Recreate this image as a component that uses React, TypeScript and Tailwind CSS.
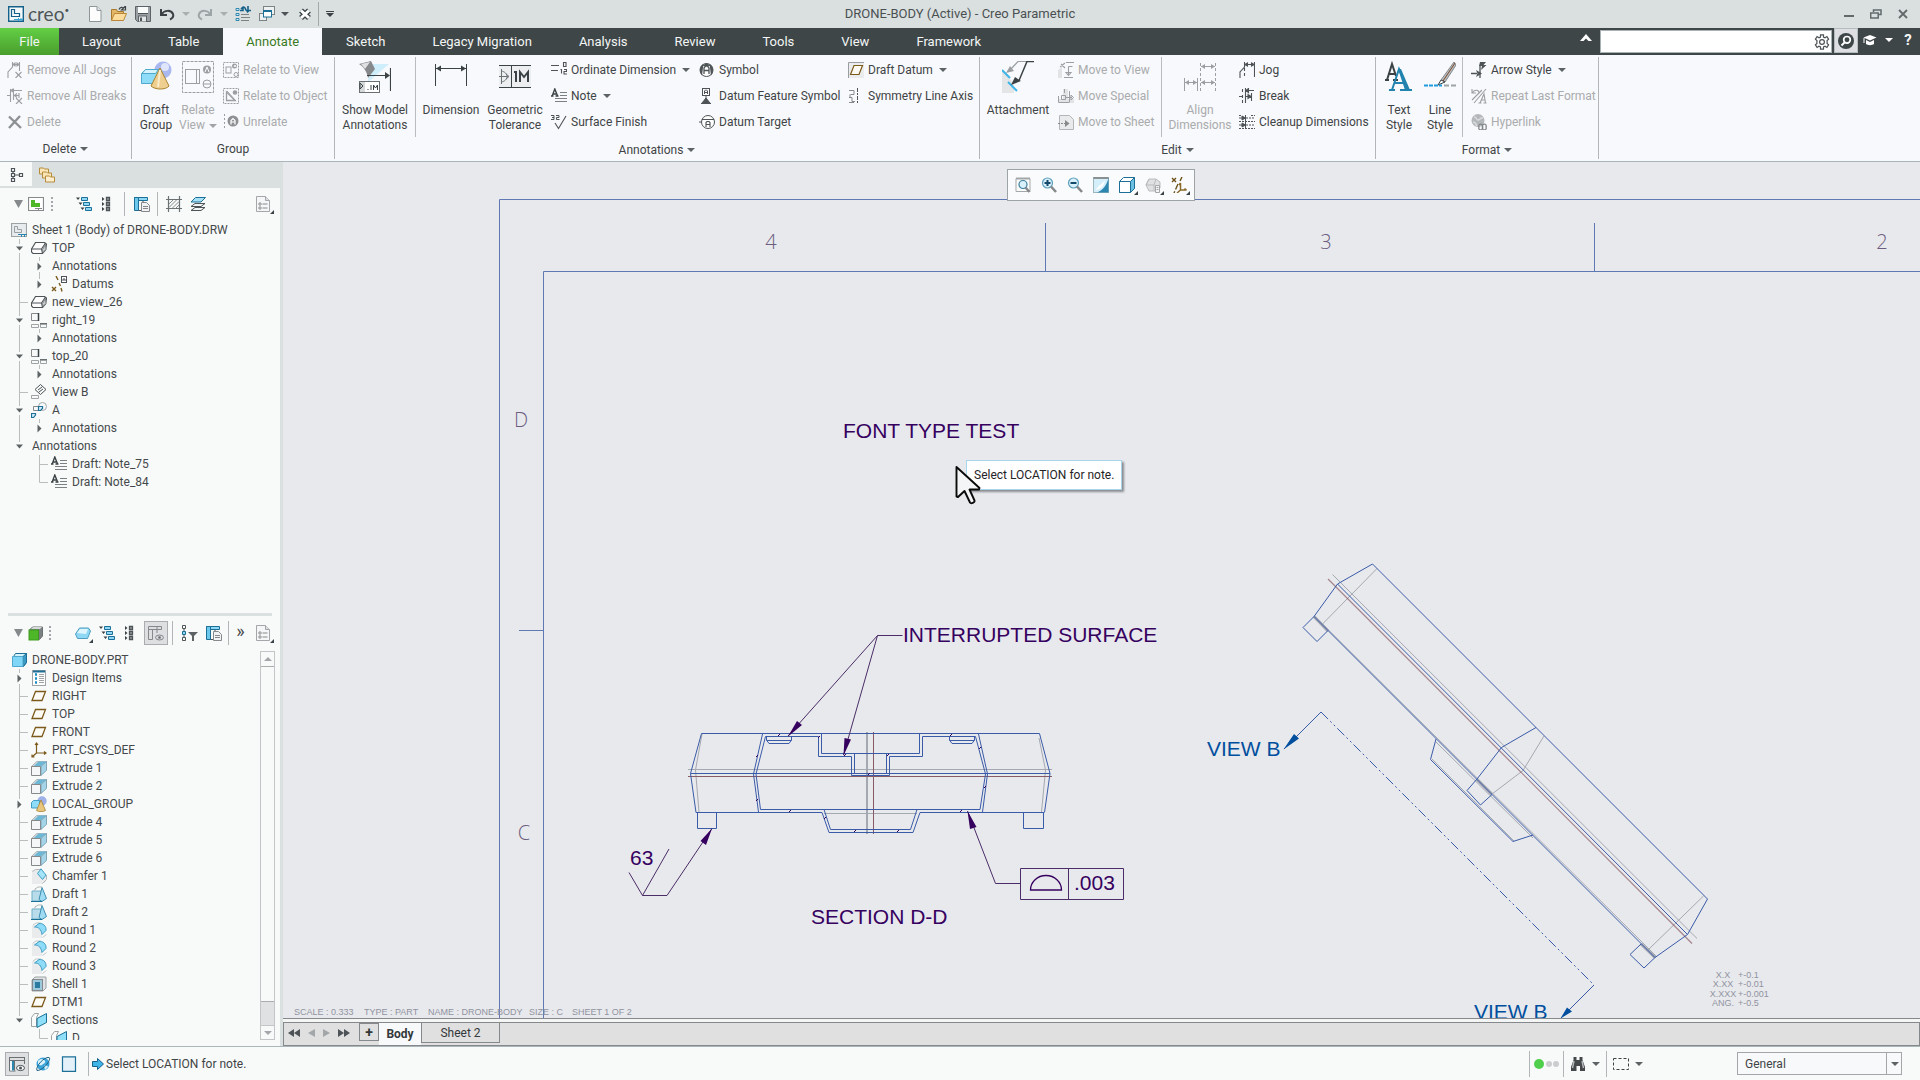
import type { ReactNode } from "react";

/* ---------- icons ---------- */

const G = "#4d5356";
const D = "#9b9fa1";
const BLUE = "#1c6f96";
const SKY = "#8fd8f5";

const ICONS: Record<string, ReactNode> = {
  newFile: (
    <>
      <path d="M2.500 .5h7.500l4 4v11h-11.500z" fill="#fdfdfe" stroke="#8e9699" />
      <path d="M10 .5v4h4" fill="#dfe5e8" stroke="#8e9699" />
    </>
  ),
  open: (
    <>
      <path d="M.5 14.500v-11h5l1 2h6v3" fill="#e3b566" stroke="#a9792d" />
      <path d="M.5 14.500l3-7h12l-3 7z" fill="#fbdc9c" stroke="#b98736" />
      <path d="M8 3.500c1-2.500 4-3 5-1M14.500 0v4h-4z" fill="none" stroke="#3b4245" strokeWidth="1.200" />
    </>
  ),
  save: (
    <>
      <path d="M.5 .5h15v15h-13l-2-2z" fill="#9aa0a3" stroke="#5c6366" />
      <rect x="3" y="1" width="10" height="6" fill="#fafbfb" />
      <path d="M3 7.500h10" stroke="#4d5356" />
      <rect x="3.500" y="10" width="8" height="6" fill="#e3e6e7" stroke="#5c6366" />
      <rect x="5" y="11.500" width="2" height="3.500" fill="#4d5356" />
    </>
  ),
  undo: <path d="M2 3v6h6M2.500 8.500C5 4 12 3.500 14 8c.8 2.500-.7 4.500-3 5.500" fill="none" stroke="#3b4245" strokeWidth="2" />,
  redo: <path d="M14 3v6h-6M13.500 8.500C11 4 4 3.500 2 8c-.8 2.500 .7 4.500 3 5.500" fill="none" stroke="#9ea5a6" strokeWidth="2" />,
  regen: (
    <>
      <path d="M1 2.500h3v2h-3zM1 7.500h3v2h-3zM1 12.500h3v2h-3z" fill="#d7effa" stroke="#2f87ad" />
      <path d="M6 8.500h8M6 11.500h9M6 14.500h8" stroke="#7d8385" />
      <path d="M5 4.500h3v-3M8 1l-2 2M12 6.500l2-2h2M13 0v6M7.500 1.500c1.500-1 2.500 0 3 1.500s1.500 2 2.500 1.500" fill="none" stroke="#14618a" strokeWidth="1.600" />
    </>
  ),
  windows: (
    <>
      <rect x="4.500" y=".5" width="11" height="8" fill="#eef1f2" stroke="#7d8385" />
      <rect x=".5" y="7.500" width="7" height="7" fill="#eef1f2" stroke="#7d8385" />
      <rect x="4.500" y="4.500" width="8" height="6.500" fill="#fff" stroke="#1c6f96" />
      <path d="M4 5h9" stroke="#1c6f96" strokeWidth="2" />
    </>
  ),
  closeWin: (
    <>
      <path d="M4 4.500l8 7.500M12 4.500L4 12" stroke="#3b4245" strokeWidth="5.500" />
      <path d="M4 4.500l8 7.500M12 4.500L4 12" stroke="#fff" strokeWidth="3" />
    </>
  ),
  jogs: (
    <path d="M5.500 0v5L1 10v6M12.500 0v9M6 2.500h6M6 2.500l2-1.500v3zM12 2.500l-2-1.500v3zM8.500 10l6 6M14.500 10l-6 6" fill="none" stroke={D} strokeWidth="1.100" />
  ),
  breaks: (
    <path d="M0 7.500h3M3.500 1v13M6.500 1v11M4 2.500h11M4 2.500l2-1.500v3zM7 7.500h5M12 5v5M10 9.500l-2.500-2 2.500-2M9 10l6 6M15 10l-6 6" fill="none" stroke={D} strokeWidth="1.100" />
  ),
  del: <path d="M2 2.500l12 11.500M13 2L2 14" stroke="#8d9193" strokeWidth="2.400" />,
  relView: (
    <>
      <rect x=".5" y=".5" width="15" height="15" fill="none" stroke={D} strokeDasharray="2 1" />
      <rect x="3" y="5" width="5" height="6" fill="none" stroke={D} />
      <circle cx="11.500" cy="4" r="2.500" fill={D} />
      <circle cx="13" cy="12.500" r="2" fill="none" stroke={D} />
      <path d="M11 5l1-2 1 2" stroke="#fff" fill="none" />
    </>
  ),
  relObj: (
    <>
      <rect x=".5" y=".5" width="15" height="15" fill="none" stroke={D} strokeDasharray="2 1" />
      <path d="M3.500 4v8.500h8.500z" fill="none" stroke={D} strokeWidth="1.300" />
      <circle cx="12" cy="4.500" r="2.300" fill={D} />
      <path d="M4 3l9 10" stroke={D} />
    </>
  ),
  unrel: (
    <>
      <path d="M1.500 0v16" stroke={D} strokeDasharray="2 2" />
      <circle cx="10" cy="7" r="5.500" fill="#8d9193" />
      <path d="M8 10.500V6.500l2-2 2 2v4M8 8h4" fill="none" stroke="#fff" strokeWidth="1.200" />
    </>
  ),
  ordinate: (
    <>
      <path d="M0 3.500h8M0 8.500h7" stroke={G} />
      <path d="M12.500 .5h2.500v4h-2.500zM9.500 7.500h1v4M13 7.500h2.500v2h-2.500v2.500h3" fill="none" stroke={G} strokeWidth="1.100" />
    </>
  ),
  note: (
    <>
      <path d="M0 8h2.500M4.500 8h3M1.200 8L3.800 1l2.800 7M2 6h3.500" fill="none" stroke="#3b4245" strokeWidth="1.400" />
      <path d="M9 4.500h7M9 7.500h7M4 10.500h12M4 13.500h12" stroke="#7b8082" />
    </>
  ),
  surface: (
    <>
      <path d="M0 1.500h3v2H1M3 3.500v2H0M5 1.500h3v2H5.500v2H8.500" fill="none" stroke={G} />
      <path d="M4 9l3.500 5.500L15 2" fill="none" stroke={G} strokeWidth="1.100" />
    </>
  ),
  symbol: (
    <>
      <circle cx="7.500" cy="8" r="6.500" fill="#fff" stroke={G} />
      <path d="M1 8a6.500 6.500 0 0 1 3.500-6L3 13.500A6.500 6.500 0 0 1 1 8zM14 8a6.500 6.500 0 0 0-3.500-6L12 13.500A6.500 6.500 0 0 0 14 8z" fill={G} />
      <path d="M3 4l4.500-3L12 4z" fill={G} />
      <path d="M5 12V6l1.500-2h2L10 6v6M5 8.500h5" fill="none" stroke={G} strokeWidth="1.300" />
    </>
  ),
  datumFeat: (
    <>
      <rect x="3.500" y=".5" width="7" height="7" fill="#fff" stroke={G} />
      <path d="M5.500 6V3l1-1h1l1 1v3M5.500 4.500h3M7 8v4" fill="none" stroke={G} />
      <path d="M7 10l4 5H3zM2 15.500h10" fill={G} stroke={G} />
    </>
  ),
  datumTarget: (
    <>
      <circle cx="9" cy="8" r="6.500" fill="#fff" stroke={G} />
      <path d="M0 8h2.500M3 5.500h12M7 13V8.500l1-1h2l1 1V13M7 10.500h4" fill="none" stroke={G} strokeWidth="1.100" />
    </>
  ),
  draftDatum: (
    <>
      <path d="M.5 16V.5H16" fill="none" stroke="#9a9ea0" />
      <rect x="1" y="1" width="15" height="15" fill="#ebecee" />
      <path d="M6 3.500h8.500l-3.500 9H2.500z" fill="#fdfaf4" stroke="#7c5a1c" strokeWidth="1.200" />
    </>
  ),
  symAxis: (
    <>
      <path d="M9.500 0v16" stroke={G} strokeDasharray="4 1 2 1" />
      <path d="M1 2.500h5v4H2.500M1 9.500h3v4h3M2 6.500v3M1 14.500h5" fill="none" stroke="#85898b" />
    </>
  ),
  moveView: (
    <>
      <path d="M0 8l4-3v11H0z" fill="#e1e3e4" />
      <path d="M3 2l4 4M7 1l-5 4M8 .5h8M10.500 4.500h4M10.500 4.500v9M6 15.500h9M10.500 13.500l-2.500-3h5z" fill="none" stroke={D} strokeWidth="1.100" />
    </>
  ),
  moveSpecial: (
    <>
      <path d="M0 11h5V1h5v10h6v4H0z" fill="#e1e3e4" />
      <path d="M.5 14.500h11M.5 8v6M6.500 1v4M11.500 3v11M3.500 7.500h4v4h-4zM8 9.500h6M13 7l2.500 2.500L13 12z" fill="none" stroke={D} />
    </>
  ),
  moveSheet: (
    <>
      <path d="M1.500 1.500h10l4 4v10h-14z" fill="#e8eaeb" stroke="#b3b6b8" />
      <path d="M0 9.500h8" stroke="#85898b" strokeDasharray="2 1" />
      <path d="M7 6l4.500 3.500L7 13z" fill="#85898b" />
    </>
  ),
  jog: (
    <path d="M5.500 0v5L1 10v6M15.500 0v15M6 2.500h9M6 2.500l2.500-1.500v3zM15 2.500l-2.500-1.500v3zM5.500 6v3M5.500 11v3" fill="none" stroke={G} strokeWidth="1.100" />
  ),
  brk: (
    <path d="M0 8.500h3M6.500 8.500h6M12.500 5v8M3.500 1v3M3.500 7v3M3.500 12v3M6.500 0v15M6.500 2.500H15M7 2.500L9.500 .5v4zM12 8.500L9 6.500v4z" fill="none" stroke={G} strokeWidth="1.100" />
  ),
  cleanup: (
    <>
      <path d="M0 1.500h2M12 1.500h4M0 7.500h16M0 14.500h16M7 4h9M7 11h9" stroke={G} strokeDasharray="2 1" />
      <path d="M0 4h6M0 11h6M6.500 1v14M3 2l3.500 2L3 6zM3 9l3.500 2L3 13z" fill={G} stroke={G} />
    </>
  ),
  arrowStyle: (
    <>
      <path d="M0 11.500h6M9 4v12" stroke={G} strokeWidth="1.300" fill="none" />
      <path d="M5 8l6 3.500L5 15l1.500-3.500zM9 0l6 0-2.500 3h3L10 8l1-4H8z" fill={G} />
    </>
  ),
  repeatFmt: (
    <path d="M1 1v4h4M1.500 4.500C4 1 8 2 8 5M15 1L3 15M11 2L1 12M7.500 15h3M12.500 15h3M9 15l4-9 1.500 9M10 12h4" fill="none" stroke={D} strokeWidth="1.100" />
  ),
  hyper: (
    <>
      <circle cx="7" cy="6.500" r="6.500" fill="#b5b8ba" />
      <path d="M3 3c3 0 2 3 4 3s3-3 5-2M2 8c3 0 3 3 4 4" stroke="#d9dbdc" strokeWidth="1.500" fill="none" />
      <path d="M8 13a2 2 0 1 1 3.500 0 2 2 0 1 0 3.500 0 2 2 0 1 0-3.500 0 2 2 0 1 1-3.500 0z" fill="none" stroke="#85898b" strokeWidth="1.300" />
    </>
  ),
  zoomFit: (
    <>
      <path d="M1 1.500h14v13H1z" fill="#fafbfb" stroke="#a3a7a9" />
      <path d="M1 1.500h14" stroke="#a3a7a9" strokeWidth="2" />
      <circle cx="8" cy="7.500" r="4" fill="#d9f1fb" stroke="#3b7f9e" strokeWidth="1.200" />
      <path d="M10.500 10.500l4 4.500" stroke="#85898b" strokeWidth="2.400" />
    </>
  ),
  zoomIn: (
    <>
      <circle cx="6.500" cy="6" r="5" fill="#d9f1fb" stroke="#5e9fbd" strokeWidth="1.200" />
      <path d="M10 9.500l5 5.500" stroke="#85898b" strokeWidth="2.600" />
      <path d="M6.500 3v6M3.500 6h6" stroke="#13496a" strokeWidth="2" />
    </>
  ),
  zoomOut: (
    <>
      <circle cx="6.500" cy="6" r="5" fill="#d9f1fb" stroke="#5e9fbd" strokeWidth="1.200" />
      <path d="M10 9.500l5 5.500" stroke="#85898b" strokeWidth="2.600" />
      <path d="M3.500 6h6" stroke="#13496a" strokeWidth="2" />
    </>
  ),
  repaint: (
    <>
      <rect x=".5" y=".5" width="15" height="15" fill="#d4eefa" stroke="#9db5bf" />
      <path d="M15.500 .5v15H4C10 13 14 8 15.500 .5z" fill="#2b87b0" />
      <path d="M3 13c2-5 7-6 9-10-1 6-4 9-9 10z" fill="#fff" />
      <path d="M.5 1h15" stroke="#8a9092" strokeWidth="2" />
    </>
  ),
  shade: (
    <>
      <path d="M.5 4.500l4-4h11v11l-4 4H.5z" fill="#fff" stroke={BLUE} />
      <path d="M11.500 4.500l4-4v11l-4 4z" fill="#6cc0e2" stroke={BLUE} />
      <path d="M.5 4.500h11v11H.5z" fill="#fff" stroke={BLUE} />
    </>
  ),
  savedView: (
    <>
      <path d="M1 8l3-6h7l4 3v6l-4 3H4z" fill="#dfe1e2" stroke="#b9bcbe" />
      <path d="M4 2l-3 6h8l2-6M9 8v6" fill="none" stroke="#b9bcbe" />
      <path d="M10.500 8.500h4v7h-4z" fill="#f4f5f5" stroke="#a3a7a9" />
      <path d="M11.500 10.500h2M11.500 12.500h2" stroke="#a3a7a9" />
    </>
  ),
  datumDisp: (
    <>
      <path d="M1 1l4 4M5 1L1 5M11 0L9 4M7 7L3 16" stroke="#6d5018" strokeWidth="1.400" strokeDasharray="6 2" fill="none" />
      <path d="M9.500 6v7h6M9.500 13L6 16M9.500 6l-1.500 2M15.500 13l-2-1.500" stroke="#8a6a2a" strokeWidth="1.500" fill="none" />
    </>
  ),
  modelTree: (
    <path d="M2.500 1.500h3v3h-3zM2.500 6.500h3v3h-3zM2.500 11.500h3v3h-3zM10.500 6.500h3v3h-3zM6 8h4M4 5v1M4 10v1" fill="none" stroke={G} strokeWidth="1.200" />
  ),
  folders: (
    <>
      <path d="M.5 1h4l1 1h4v5h-9z" fill="#fbe6b8" stroke="#b58b3c" />
      <path d="M3.500 5h4l1 1h4v5h-9z" fill="#fbe6b8" stroke="#b58b3c" />
      <path d="M6.500 9h4l1 1h4v5h-9z" fill="#fdeecd" stroke="#b58b3c" />
    </>
  ),
  sheetBox: (
    <>
      <path d="M.5 1.500h15v13H.5z" fill="#fff" stroke="#85898b" strokeWidth="1.200" />
      <path d="M3 4h4v3h5v4H3z" fill="#4db728" />
      <path d="M7 12.500h7M10.500 12v2.500" stroke="#85898b" />
    </>
  ),
  expand: (
    <>
      <path d="M5.500 1.500h6v3h-6zM7.500 6.500h6v3h-6zM9.500 11.500h6v3h-6z" fill={SKY} stroke={BLUE} />
      <path d="M0 1.500h4L2 4zM2.500 6.500h4l-2 2.500zM4.500 11.500h4l-2 2.500z" fill="#3b4245" />
    </>
  ),
  list: (
    <>
      <path d="M7.500 1.500h3v3h-3zM7.500 6.500h3v3h-3zM7.500 11.500h3v3h-3z" fill="#9ea3a5" stroke={G} strokeWidth="1.300" />
      <path d="M3 1l2.500 2L3 5zM3 6l2.500 2L3 10zM3 11l2.500 2L3 15z" fill="#3b4245" />
    </>
  ),
  columns: (
    <>
      <path d="M.5 1.500h13v3H.5z" fill={SKY} stroke={BLUE} />
      <path d="M.5 1.500h4v13h-4z" fill="#6cc8ec" stroke={BLUE} />
      <path d="M9 5v3M4.500 14.500h3" stroke={G} />
      <path d="M7.500 6.500h5l3 3v6h-8z" fill="#f0f2f3" stroke="#85898b" />
      <path d="M9 10.500h5M9 12.500h5" stroke="#85898b" />
    </>
  ),
  hatch: (
    <>
      <path d="M2.500 0v16M13.500 0v16M0 3.500h16M0 12.500h16" stroke="#6b7073" strokeWidth="1.200" />
      <path d="M3 8l4-4M3 11.500L10.500 4M6 12.500L13 5.500M9.500 12.500l3.500-3.500" stroke="#85898b" />
    </>
  ),
  layers: (
    <>
      <path d="M1 14.500l4-3h10l-4 3z" fill="#f4f5f5" stroke={G} />
      <path d="M1 10.500l4-3h10l-4 3z" fill="#f4f5f5" stroke={G} />
      <path d="M1 6l4.500-4.500h10L11 6z" fill="#a5e0f7" stroke={BLUE} />
    </>
  ),
  doc: (
    <>
      <path d="M.5 .5h9l4 4v11H.5z" fill="#f5f6f7" stroke="#a3a7a9" />
      <path d="M9.500 .5v4h4" fill="#dde0e2" stroke="#a3a7a9" />
      <path d="M6.500 8h5M6.500 12h5" stroke="#85898b" />
      <circle cx="4" cy="8" r="1.200" fill="none" stroke="#85898b" />
      <circle cx="4" cy="12" r="1.200" fill="none" stroke="#85898b" />
    </>
  ),
  sheet: (
    <>
      <path d="M.5 1.500h15v13H.5z" fill="#e8ecee" stroke="#9da3a5" strokeWidth="1.200" />
      <path d="M3.500 4.500h3v3h4v3h-7z" fill="none" stroke={D} />
      <path d="M7 12.500h9M10.500 12v3M13.500 12v3" stroke="#2b87b0" />
    </>
  ),
  view: (
    <>
      <path d="M.5 9l4-6.500h9l2 1.500-1 6-3 3.500H2L.5 12z" fill="#fdfdfd" stroke="#4d5356" strokeWidth="1.200" />
      <path d="M.5 9h10l1 4.500M10.500 9l4-6" fill="none" stroke="#4d5356" strokeWidth="1.100" />
      <path d="M11.500 9.500l3-5 .5 5-3 3z" fill="#c9cccd" stroke="#6b7073" strokeWidth=".8" />
    </>
  ),
  datums: (
    <>
      <path d="M5 0l2 4M8 7l1.500 3M10 12l1 3.500M1 11l4 4M5 11l-4 4" stroke="#7c5a1c" strokeWidth="1.400" fill="none" />
      <rect x="10.500" y=".5" width="5" height="6" fill="#fff" stroke={G} />
      <path d="M12 5V3h2v2" stroke={G} fill="none" />
    </>
  ),
  proj: (
    <>
      <path d="M.5 1.500h7v7h-7z" fill="none" stroke="#85898b" />
      <path d="M7.500 1v8M9 12h7" stroke="#3b4245" strokeWidth="1.500" />
      <path d="M.5 12.500h7v3h-7zM9.500 12.500h6v3h-6z" fill="none" stroke="#9ea3a5" />
    </>
  ),
  auxView: (
    <>
      <path d="M9.500 .5l5.500 5-5.500 5L4 5.500z" fill="none" stroke={G} />
      <path d="M7 6l4-3M8 8l4-3" stroke={G} />
      <path d="M.5 11.500h7v3h-7z" fill="none" stroke="#9ea3a5" />
    </>
  ),
  detail: (
    <>
      <circle cx="11.500" cy="4.500" r="4" fill="none" stroke="#a3a7a9" />
      <path d="M2.500 4.500h6v4h-6z" fill="none" stroke="#85898b" />
      <path d="M7.500 4.500h4v2l-2 2h-2zM.5 11.500h4v1.500l-2 2.500h-2z" fill="#d4eefa" stroke={BLUE} strokeWidth="1.200" />
    </>
  ),
  part: (
    <>
      <path d="M2.500 4.500l2-3h11v9l-3 4h-10z" fill="#d5f3fd" stroke={BLUE} />
      <path d="M12 4.500l3.500-3v9l-3.500 4z" fill="#3a9cc6" stroke={BLUE} />
      <path d="M1.500 4.500H12v10H1.500z" fill="#7fd6f7" stroke="#4fa9cf" />
    </>
  ),
  design: (
    <>
      <rect x="1.500" y=".5" width="13" height="15" fill="#fff" stroke="#9ea3a5" />
      <path d="M2 1.500h12" stroke="#1c6f96" strokeWidth="2" />
      <path d="M4 4.500h2M4 8.500h2M4 12.500h2" stroke="#1c8ec2" strokeWidth="2.500" />
      <path d="M8 4.500h5M8 6.500h5M8 8.500h5M8 10.500h5M8 12.500h5" stroke="#9ea3a5" />
    </>
  ),
  plane: <path d="M4.500 3.500h10l-3.500 9H1z" fill="#fdfbf6" stroke="#7c5a1c" strokeWidth="1.300" />,
  csys: <path d="M5.500 1v10H15M5.500 11L1 15M4 3l1.500-2L7 3M13 9.500l2 1.500-2 1.500M1 12.500V15h2.500" fill="none" stroke="#7c5a1c" strokeWidth="1.200" />,
  extrude: (
    <>
      <path d="M.5 6.500l5-5h10v8l-6 6" fill="#cfd6d9" stroke="#b3b7b9" />
      <path d="M3 6l4.500-4.500h8L10 6z" fill="#6db7d6" />
      <path d="M10 6.500l5.500-5v9l-5.500 5z" fill="#a5d3e7" stroke="#6d98ab" strokeWidth=".7" />
      <path d="M.5 6.500h9v9h-9z" fill="#f5f6f7" stroke="#85898b" />
    </>
  ),
  group: (
    <>
      <circle cx="11" cy="5" r="4.700" fill="#9fb0e8" />
      <path d="M.5 6.500l2-2h6v6l-1.500 1.500H.5z" fill="#8fdcf8" stroke="#3f9dc4" />
      <path d="M10 4l4.500 10.500c-2 1.500-7 1.500-9 0z" fill="#e9c67e" stroke="#a8832e" strokeWidth=".8" />
    </>
  ),
  chamfer: (
    <>
      <path d="M1 2h6l8 7v5l-4 2H1z" fill="#e9ebec" />
      <path d="M1.500 3.500l3-2h6M11.500 15.500l4-4V7" fill="none" stroke="#b3b7b9" />
      <path d="M6.500 5.500L10 .8l5 6.200-3.500 4.500z" fill="#a5e3f8" stroke="#3f9dc4" />
    </>
  ),
  draft: (
    <>
      <path d="M1 5h9v10H1z" fill="#b9dcea" stroke="#6fb0cb" />
      <path d="M4 3l3-2h4M3 5l2-3" stroke="#b3b7b9" fill="none" />
      <path d="M11 1.500l4.500 11-4.500 3-3-2z" fill="#9fdcf3" stroke="#3f8fb2" />
      <path d="M0 15.500h11" stroke={BLUE} />
    </>
  ),
  round: (
    <>
      <path d="M1 3h5l5 7v6H1z" fill="#e9ebec" />
      <path d="M2 3l3-2h5M11.500 15.500l4-3" fill="none" stroke="#c3c6c8" />
      <path d="M3.500 5c4-.5 7 3 7.500 7.500l4-4C15.500 4 12 1 8 1.500z" fill="#8fdcf8" stroke="#3f9dc4" />
    </>
  ),
  shell: (
    <>
      <path d="M1 4l3-3h11v11l-3 3H1z" fill="#dfe3e5" stroke="#9ea3a5" />
      <rect x="1.500" y="3.500" width="10" height="11" fill="#9cc9dc" stroke="#85898b" />
      <rect x="4" y="6" width="5" height="6" fill="#2b7a9f" />
    </>
  ),
  section: (
    <>
      <path d="M.5 5.500l3-4h4l-2 4v9h-5z" fill="#fafbfb" stroke="#9ea3a5" />
      <path d="M6 6.500l9.500-5v9l-9.500 5z" fill="#8fdff9" stroke={BLUE} />
    </>
  ),
  greenCube: (
    <>
      <path d="M1.500 5l3-3h10v9l-3 3.500z" fill="#7b8082" stroke="#6b7073" />
      <path d="M3 4l2-2h9l-2 2z" fill="#d5d8d9" />
      <rect x="1" y="5" width="9.500" height="10" fill="#4db728" stroke="#3d9a1e" />
    </>
  ),
  solid: (
    <>
      <path d="M.5 9l4-6h9l2 3-3 7.500H2.500z" fill="#8fd8f5" stroke="#4f9dbf" />
      <path d="M2 8l3-4h8l-2 5z" fill="#dff5fd" />
    </>
  ),
  gridEye: (
    <>
      <path d="M.5 1.500h13v3H.5zM.5 4.500h4v10h-4zM9 2v6" fill="none" stroke="#85898b" />
      <ellipse cx="11.500" cy="12.500" rx="4" ry="2.500" fill="#d5d7d8" stroke="#85898b" />
      <circle cx="11.500" cy="12.500" r="1.300" fill="#6b7073" />
    </>
  ),
  filter: (
    <>
      <path d="M.5 .5h3v3h-3zM.5 12.500h3v3h-3z" fill="#fff" stroke={G} />
      <path d="M.5 6.500h3v3h-3z" fill={SKY} stroke={BLUE} />
      <path d="M2 4v2M2 10v2" stroke={G} />
      <path d="M6 7h10l-4 4v5h-2v-5z" fill="#5d6265" />
    </>
  ),
  gear: (
    <>
      <path d="M6.500 .8h3v2.200l1.500 .7 1.900-1.100 1.700 2.500-1.500 1.500v2.800l1.500 1.500-1.700 2.500-1.900-1.100-1.500 .7v2.200h-3V13l-1.500-.7-1.900 1.100-1.700-2.500 1.500-1.500V6.600L1.400 5.100l1.700-2.500L5 3.700l1.500-.7z" fill="none" stroke={G} strokeWidth="1.200" />
      <circle cx="8" cy="8" r="2.400" fill="none" stroke={G} strokeWidth="1.200" />
    </>
  ),
  finder: (
    <>
      <circle cx="8" cy="8" r="8" fill="#3e4648" />
      <circle cx="9" cy="6.800" r="3.300" fill="none" stroke="#fff" strokeWidth="1.700" />
      <path d="M6.500 9.500L3.500 12.500" stroke="#fff" strokeWidth="2" />
    </>
  ),
  cap: (
    <>
      <path d="M8 3l6.500 2.500L8 8.500 1.500 5.500z" fill="#fff" />
      <path d="M4 8v4c2 1.500 6 1.500 8 0V8l-4 2z" fill="#fff" />
      <path d="M2 6v5" stroke="#fff" />
    </>
  ),
  navPane: (
    <>
      <path d="M.5 1.500h15M.5 1v14h6M1 4.500h14.500V8M5.500 4.500v10M15.500 1v4" fill="none" stroke="#6b7073" />
      <path d="M1 5h4v9.500H1z" fill="#eef6fa" />
      <path d="M4 5v9.500" stroke="#2b87b0" strokeWidth="2" />
      <ellipse cx="11.500" cy="12" rx="4" ry="2.600" fill="#fff" stroke={G} />
      <circle cx="11.500" cy="12" r="1.500" fill={G} />
    </>
  ),
  globe: (
    <>
      <circle cx="8" cy="8" r="6.500" fill="#3aa4d8" />
      <path d="M3 5c3-3 6-2 7 0s-2 3-3 4-3 0-4-1zM9 10c2-1 4 0 4 1l-3 3z" fill="#d8f1fb" />
      <path d="M2 14.500C0 11 9 .5 14 1.500c3 1-5 13-12 13z" fill="none" stroke="#1c5f82" />
    </>
  ),
  pane: <path d="M1.500 .8h13v14.500h-13z" fill="#e4f1f8" stroke={BLUE} strokeWidth="1.200" />,
  binoc: (
    <>
      <path d="M3.500 1h3v3h3V1h3v3l2.500 7v4H10v-5H6.500v5H1v-4l2.500-7z" fill="#44484a" />
      <path d="M4 5L2.500 12M12 5l1.500 7" stroke="#b9bcbe" strokeWidth="1.400" />
    </>
  ),
  marquee: <path d="M.5 2.500h15v11H.5z" fill="none" stroke="#3b4245" strokeDasharray="3 2" />,
};

function Icon({ name, size = "size-4" }: { name: string; size?: string }) {
  return (
    <svg viewBox="0 0 16 16" className={`${size} shrink-0`} aria-hidden="true">
      {ICONS[name]}
    </svg>
  );
}

function Caret({ className = "text-[#5d6265]" }: { className?: string }) {
  return (
    <svg viewBox="0 0 8 4" className={`h-1 w-2 shrink-0 ${className}`} aria-hidden="true">
      <path d="M0 0h8L4 4z" fill="currentColor" />
    </svg>
  );
}

/* 32px ribbon artwork */
const ART: Record<string, ReactNode> = {
  draftGroup: (
    <>
      <circle cx="23" cy="9" r="8.500" fill="#a9b8ef" />
      <circle cx="25" cy="6" r="4" fill="#dfe5fb" />
      <path d="M1.500 12.500l4-4h13v10l-3 4h-14z" fill="#8fdcf8" stroke="#4fa9cf" />
      <path d="M2 12.500h13.500l3-4h-13z" fill="#d5f3fd" stroke="#4fa9cf" />
      <path d="M20 7l9 18c-3 4-14 4-18 0z" fill="#efcf8f" stroke="#a8832e" />
      <path d="M20 9l-2 17" stroke="#fbeccb" strokeWidth="2" />
    </>
  ),
  relateView: (
    <>
      <rect x=".5" y=".5" width="31" height="31" fill="none" stroke={D} strokeDasharray="3 1" />
      <rect x="3.500" y="8.500" width="14" height="14" fill="none" stroke={D} />
      <path d="M14.500 9v13" stroke={D} />
      <circle cx="25" cy="8.500" r="4" fill={D} />
      <path d="M23 11l2-5 2 5" stroke="#fff" fill="none" />
      <circle cx="25" cy="23" r="4" fill="none" stroke={D} />
      <path d="M21 23h8" stroke={D} />
    </>
  ),
  showModel: (
    <>
      <path d="M14 3h16L8 22z" fill="#cfeefb" />
      <path d="M0 3l12-3 4 8-7 9c-1-6-4-11-9-14z" fill="#85898b" />
      <path d="M2 3l9-2-5 7z" fill="#dfe1e2" />
      <path d="M8 14.500h22M31.500 7v23" stroke="#3b4245" strokeWidth="1.200" />
      <path d="M26 11l5 3.500-5 3.500z" fill="#3b4245" />
      <rect x=".5" y="20.500" width="20" height="11" fill="#fff" stroke="#6b7073" />
      <rect x="1" y="21" width="5" height="10" fill="#d5d8d9" />
      <path d="M1 22l3 3-3 3zM9 28v1M12 24v5M14.500 29v-5l2 3 2-3v5" fill="none" stroke="#3b4245" />
    </>
  ),
  dimension: (
    <>
      <path d="M.5 3v22M31.500 3v22M1 7.500h30" stroke="#3b4245" />
      <path d="M1 7.500l5-3v6zM31 7.500l-5-3v6z" fill="#3b4245" />
    </>
  ),
  gtol: (
    <>
      <path d="M0 4.500h32v22H0z" fill="#edeeef" />
      <path d="M0 4.500h32M0 26.500h32M12.500 4v22" stroke="#3b4245" />
      <path d="M0 15.500h9M2.500 8v15M2 10c8 1 8 10 0 11M7 13l3 2.500L7 18" fill="none" stroke="#6b7073" />
      <path d="M15 11h2v10M21 21V11l4 5 4-5v10" fill="none" stroke="#3b4245" strokeWidth="2" />
    </>
  ),
  attachment: (
    <>
      <path d="M0 10l12 12v10H0z" fill="#e3e5e7" />
      <path d="M0 9l8 8M6 21l9 9" stroke="#3fb4e8" strokeWidth="2" />
      <path d="M26 .500H16L8 9" fill="none" stroke={D} strokeWidth="1.200" />
      <path d="M4 12l4-7 4 5z" fill={D} />
      <path d="M32 .500h-7l-8 19" fill="none" stroke="#3b4245" strokeWidth="1.500" />
      <path d="M9 24l4-8 6 4z" fill="#3b4245" />
    </>
  ),
  alignDim: (
    <>
      <path d="M16.500 2v28M31.500 2v28" stroke={D} strokeDasharray="3 2" />
      <path d="M.5 17v13M13.500 17v13M17 5.500h14M1 21.500h12M17 21.500h14" stroke={D} />
      <path d="M17 5.500l4-2.500v5zM31 5.500l-4-2.500v5zM1 21.500l4-2.500v5zM13 21.500l-4-2.500v5zM17 21.500l4-2.500v5zM31 21.500l-4-2.500v5z" fill={D} />
    </>
  ),
  textStyle: (
    <>
      <path d="M2 19h4M10 19h5M4 19L9 3l4 12M5 13h7" fill="none" stroke="#3b4245" strokeWidth="2" />
      <path d="M6 29h6M17 29h12M9 29l7-21 9 21M12 22h9" fill="none" stroke="#2183ae" strokeWidth="2" />
      <path d="M15 8h3l9 21h-5z" fill="#2183ae" />
    </>
  ),
  lineStyle: (
    <>
      <path d="M30 1l2 3-11 17-4-2z" fill="#b9bcbe" stroke="#85898b" />
      <path d="M31 2L19 20" stroke="#7a4a2a" />
      <path d="M17 19l4 2-7 3z" fill="#fff" stroke="#3b4245" />
      <path d="M0 24.500h18" stroke="#1e9bdc" strokeWidth="2" strokeDasharray="4 1" />
      <path d="M20 24.500h12" stroke="#9ea3a5" strokeWidth="2" strokeDasharray="5 2" />
    </>
  ),
};

/* ---------- title bar ---------- */

const QUICK = [
  { icon: "newFile", w: "w-6", label: "New" },
  { icon: "open", w: "w-6", label: "Open" },
  { icon: "save", w: "w-6", label: "Save" },
  { icon: "undo", w: "w-6", label: "Undo" },
  { icon: "", w: "w-3.5", label: "Undo list", dim: true },
  { icon: "redo", w: "w-6", label: "Redo" },
  { icon: "", w: "w-3.5", label: "Redo list", dim: true },
  { icon: "regen", w: "w-6", label: "Regenerate" },
  { icon: "windows", w: "w-6", label: "Windows" },
  { icon: "", w: "w-3", label: "Window list" },
  { icon: "closeWin", w: "w-[27px]", label: "Close window" },
];

function TitleBar() {
  return (
    <header className="grid h-7 shrink-0 grid-cols-[1fr_auto_1fr] items-center bg-[#dae0e0]">
      <div className="flex items-center">
        <svg viewBox="0 0 16 16" className="ml-2 size-4" aria-hidden="true">
          <path d="M.7 .7h14.600v14.600H.7z" fill="#f3f8fa" stroke="#14618a" strokeWidth="1.400" />
          <path d="M3.500 3.500h3v4h5v3h-8z" fill="none" stroke="#14618a" strokeWidth="1.200" />
          <path d="M6 13.500h9M10.500 12v3M13 12v3" stroke="#3aa4d8" />
        </svg>
        <span className="ml-1 w-[55px] font-[Lato] text-[19px] leading-6 text-[#4d5558]">
          creo<span className="align-top text-[8px] leading-4">•</span>
        </span>
        {QUICK.map((q) => (
          <button key={q.label} aria-label={q.label} className={`flex h-6 items-center justify-center ${q.w}`}>
            {q.icon ? <Icon name={q.icon} /> : <Caret className={q.dim ? "text-[#a9aeaf]" : "text-[#4d5356]"} />}
          </button>
        ))}
        <span className="h-6 w-px bg-[#a3a8a9]" />
        <button aria-label="Customize toolbar" className="flex h-6 w-[22px] flex-col items-center justify-center gap-px">
          <span className="h-px w-2 bg-[#3b4245]" />
          <Caret className="text-[#3b4245]" />
        </button>
      </div>
      <h1 className="text-[13px] text-[#4a5052]">DRONE-BODY (Active) - Creo Parametric</h1>
      <div className="flex justify-end pr-1">
        <button aria-label="Minimize" className="flex h-6 w-[27px] items-center justify-center">
          <span className="mt-1 h-0.5 w-2.5 bg-[#62696b]" />
        </button>
        <button aria-label="Restore" className="flex h-6 w-[27px] items-center justify-center">
          <svg viewBox="0 0 12 10" className="h-2.5 w-3">
            <path d="M3.500 3V1h7.500v4.500H9M.7 4h7.500v5H.7z" fill="none" stroke="#62696b" strokeWidth="1.500" />
          </svg>
        </button>
        <button aria-label="Close" className="flex h-6 w-[27px] items-center justify-center">
          <svg viewBox="0 0 10 10" className="size-2.5">
            <path d="M1 1l8 8M9 1L1 9" stroke="#62696b" strokeWidth="1.800" />
          </svg>
        </button>
      </div>
    </header>
  );
}

/* ---------- ribbon tabs ---------- */

const TABS = ["Layout", "Table", "Annotate", "Sketch", "Legacy Migration", "Analysis", "Review", "Tools", "View", "Framework"];

function TabBar() {
  return (
    <nav className="flex h-[27px] shrink-0 bg-[#3e4648] text-[13px] text-[#f4f6f6]">
      <button className="w-[59px] bg-gradient-to-b from-[#62cf45] to-[#4a9e2c]">File</button>
      <div className="flex gap-px">
        {TABS.map((t) => (
          <button key={t} className={t === "Annotate" ? "bg-[#f8f9fc] px-[23px] text-[#3b7a1e]" : "px-[23px]"}>
            {t}
          </button>
        ))}
      </div>
      <div className="ml-auto flex items-start">
        <button aria-label="Collapse ribbon" className="mr-2 flex h-[18px] w-3 items-center justify-center">
          <svg viewBox="0 0 12 7" className="h-[7px] w-3">
            <path d="M0 7l6-7 6 7H8.500L6 4.500 3.500 7z" fill="#fff" />
          </svg>
        </button>
        <label className="mt-0.5 flex h-[23px] w-[232px] items-center border border-[#a9b3b5] bg-white pr-px">
          <input aria-label="Command search" className="h-full min-w-0 flex-1 outline-none" />
          <Icon name="gear" />
        </label>
        <button aria-label="Search" className="ml-0.5 flex h-[25px] w-6 items-center justify-center border border-[#b5bcbe] bg-[#dddfe3]">
          <Icon name="finder" />
        </button>
        <button aria-label="Learning" className="ml-0.5 flex h-6 w-5 items-center justify-center">
          <Icon name="cap" />
        </button>
        <button aria-label="Learning list" className="flex h-6 w-[18px] items-center justify-center">
          <Caret className="text-white" />
        </button>
        <button aria-label="Help" className="mr-0.5 h-6 w-5 text-[15px] font-bold">?</button>
      </div>
    </nav>
  );
}

/* ---------- ribbon ---------- */

type Cmd = { icon: string; text: string; off?: boolean; menu?: boolean };

function Big({ art, lines, className, off, menu }: { art: string; lines: string[]; className: string; off?: boolean; menu?: boolean }) {
  return (
    <button disabled={off} className={`flex flex-col items-center pt-1 ${className} ${off ? "text-[#a9abad]" : ""}`}>
      <svg viewBox="0 0 32 32" className="size-8 shrink-0" aria-hidden="true">
        {ART[art]}
      </svg>
      <span className="mt-2.5 leading-[15px] whitespace-nowrap">
        {lines.map((l, i) => (
          <span key={l} className="flex items-center justify-center gap-1">
            {l}
            {menu && i === lines.length - 1 && <Caret className="text-[#a0a3a5]" />}
          </span>
        ))}
      </span>
    </button>
  );
}

function Col({ items, className }: { items: Cmd[]; className: string }) {
  return (
    <div className={`flex flex-col items-start ${className}`}>
      {items.map((c) => (
        <button key={c.text} disabled={c.off} className={`flex h-[26px] items-center gap-1 whitespace-nowrap ${c.off ? "text-[#a9abad]" : ""}`}>
          <Icon name={c.icon} />
          {c.text}
          {c.menu && <span className="ml-0.5"><Caret /></span>}
        </button>
      ))}
    </div>
  );
}

function Group({ name, menu, className, children }: { name: string; menu?: boolean; className: string; children: ReactNode }) {
  return (
    <section className={`my-0.5 flex flex-col border-r border-[#b3b6b9] ${className}`}>
      <div className="flex h-20">{children}</div>
      <button className="flex h-[26px] items-center justify-center gap-1 pt-1">
        {name}
        {menu && <Caret />}
      </button>
    </section>
  );
}

function Sep({ className = "" }: { className?: string }) {
  return <span className={`h-20 w-px bg-[#b9bcbf] ${className}`} />;
}

function Ribbon() {
  return (
    <div className="flex h-[107px] shrink-0 border-b border-[#a9b7ba] bg-[#f8f9fc] text-[12px] text-[#3f4446]">
      <Group name="Delete" menu className="w-[132px]">
        <Col
          className="pl-[7px]"
          items={[
            { icon: "jogs", text: "Remove All Jogs", off: true },
            { icon: "breaks", text: "Remove All Breaks", off: true },
            { icon: "del", text: "Delete", off: true },
          ]}
        />
      </Group>
      <Group name="Group" className="w-[203px]">
        <Big art="draftGroup" lines={["Draft", "Group"]} className="ml-1 w-10" />
        <Big art="relateView" lines={["Relate", "View"]} off menu className="w-11" />
        <Col
          className="pl-[3px]"
          items={[
            { icon: "relView", text: "Relate to View", off: true },
            { icon: "relObj", text: "Relate to Object", off: true },
            { icon: "unrel", text: "Unrelate", off: true },
          ]}
        />
      </Group>
      <Group name="Annotations" menu className="w-[645px]">
        <Big art="showModel" lines={["Show Model", "Annotations"]} className="w-20" />
        <Sep />
        <Big art="dimension" lines={["Dimension"]} className="w-[70px]" />
        <Big art="gtol" lines={["Geometric", "Tolerance"]} className="w-[58px]" />
        <Col
          className="w-[148px] pl-[7px]"
          items={[
            { icon: "ordinate", text: "Ordinate Dimension", menu: true },
            { icon: "note", text: "Note", menu: true },
            { icon: "surface", text: "Surface Finish" },
          ]}
        />
        <Col
          className="w-[149px] pl-[7px]"
          items={[
            { icon: "symbol", text: "Symbol" },
            { icon: "datumFeat", text: "Datum Feature Symbol" },
            { icon: "datumTarget", text: "Datum Target" },
          ]}
        />
        <Col
          className="pl-[7px]"
          items={[
            { icon: "draftDatum", text: "Draft Datum", menu: true },
            { icon: "symAxis", text: "Symmetry Line Axis" },
          ]}
        />
      </Group>
      <Group name="Edit" menu className="w-[396px]">
        <Big art="attachment" lines={["Attachment"]} className="w-[76px]" />
        <Col
          className="w-[105px] pl-0.5"
          items={[
            { icon: "moveView", text: "Move to View", off: true },
            { icon: "moveSpecial", text: "Move Special", off: true },
            { icon: "moveSheet", text: "Move to Sheet", off: true },
          ]}
        />
        <Sep />
        <Big art="alignDim" lines={["Align", "Dimensions"]} off className="w-[76px]" />
        <Col
          className="pl-px"
          items={[
            { icon: "jog", text: "Jog" },
            { icon: "brk", text: "Break" },
            { icon: "cleanup", text: "Cleanup Dimensions" },
          ]}
        />
      </Group>
      <Group name="Format" menu className="w-[223px]">
        <Big art="textStyle" lines={["Text", "Style"]} className="w-[46px]" />
        <Big art="lineStyle" lines={["Line", "Style"]} className="w-9" />
        <Sep className="ml-1" />
        <Col
          className="pl-2"
          items={[
            { icon: "arrowStyle", text: "Arrow Style", menu: true },
            { icon: "repeatFmt", text: "Repeat Last Format", off: true },
            { icon: "hyper", text: "Hyperlink", off: true },
          ]}
        />
      </Group>
    </div>
  );
}

/* ---------- trees ---------- */

/* guides: one letter per 20px gutter: v line, t tee, l elbow, o open arrow, e open arrow at the end, c closed arrow, s closed arrow on a stub */
type Row = { g: string; icon?: string; text: string };

const GUIDES: Record<string, ReactNode> = {
  v: <path d="M10.500 0v18" stroke="#b9bdbe" />,
  t: <path d="M10.500 0v18M11 9.500h8" stroke="#b9bdbe" />,
  l: <path d="M10.500 0v9.500H19" stroke="#b9bdbe" fill="none" />,
  o: (
    <>
      <path d="M10.500 0v5M10.500 14v4" stroke="#b9bdbe" />
      <path d="M7 7.500h7l-3.500 4z" fill="#5d6265" />
    </>
  ),
  e: (
    <>
      <path d="M10.500 0v5" stroke="#b9bdbe" />
      <path d="M7 7.500h7l-3.500 4z" fill="#5d6265" />
    </>
  ),
  c: (
    <>
      <path d="M10.500 0v4M10.500 15v3" stroke="#b9bdbe" />
      <path d="M8.500 5.500v8l4-4z" fill="#5d6265" />
    </>
  ),
  s: (
    <>
      <path d="M10.500 0v4" stroke="#b9bdbe" />
      <path d="M8.500 5.500v8l4-4z" fill="#5d6265" />
    </>
  ),
};

const DRAWING_TREE: Row[] = [
  { g: "", icon: "sheet", text: "Sheet 1 (Body) of DRONE-BODY.DRW" },
  { g: "o", icon: "view", text: "TOP" },
  { g: "vc", text: "Annotations" },
  { g: "vs", icon: "datums", text: "Datums" },
  { g: "t", icon: "view", text: "new_view_26" },
  { g: "o", icon: "proj", text: "right_19" },
  { g: "vs", text: "Annotations" },
  { g: "o", icon: "proj", text: "top_20" },
  { g: "vs", text: "Annotations" },
  { g: "t", icon: "auxView", text: "View B" },
  { g: "o", icon: "detail", text: "A" },
  { g: "vs", text: "Annotations" },
  { g: "e", text: "Annotations" },
  { g: " t", icon: "note", text: "Draft: Note_75" },
  { g: " l", icon: "note", text: "Draft: Note_84" },
];

const MODEL_TREE: Row[] = [
  { g: "", icon: "part", text: "DRONE-BODY.PRT" },
  { g: "c", icon: "design", text: "Design Items" },
  { g: "t", icon: "plane", text: "RIGHT" },
  { g: "t", icon: "plane", text: "TOP" },
  { g: "t", icon: "plane", text: "FRONT" },
  { g: "t", icon: "csys", text: "PRT_CSYS_DEF" },
  { g: "t", icon: "extrude", text: "Extrude 1" },
  { g: "t", icon: "extrude", text: "Extrude 2" },
  { g: "c", icon: "group", text: "LOCAL_GROUP" },
  { g: "t", icon: "extrude", text: "Extrude 4" },
  { g: "t", icon: "extrude", text: "Extrude 5" },
  { g: "t", icon: "extrude", text: "Extrude 6" },
  { g: "t", icon: "chamfer", text: "Chamfer 1" },
  { g: "t", icon: "draft", text: "Draft 1" },
  { g: "t", icon: "draft", text: "Draft 2" },
  { g: "t", icon: "round", text: "Round 1" },
  { g: "t", icon: "round", text: "Round 2" },
  { g: "t", icon: "round", text: "Round 3" },
  { g: "t", icon: "shell", text: "Shell 1" },
  { g: "t", icon: "plane", text: "DTM1" },
  { g: "e", icon: "section", text: "Sections" },
  { g: " l", icon: "section", text: "D" },
];

function Tree({ rows }: { rows: Row[] }) {
  return (
    <ul className="pl-[9px]">
      {rows.map((r, i) => (
        <li key={i} className="flex h-[18px] items-center whitespace-nowrap">
          {r.g.split("").map((k, j) => (
            <svg key={j} viewBox="0 0 20 18" className="h-[18px] w-5 shrink-0" aria-hidden="true">
              {GUIDES[k]}
            </svg>
          ))}
          {r.icon ? (
            <span className="mr-[5px] ml-0.5">
              <Icon name={r.icon} />
            </span>
          ) : (
            <span className="w-[3px]" />
          )}
          {r.text}
        </li>
      ))}
    </ul>
  );
}

function Tool({ icon, label, className = "w-6" }: { icon: string; label: string; className?: string }) {
  return (
    <button aria-label={label} className={`flex h-6 items-center justify-center ${className}`}>
      <Icon name={icon} />
    </button>
  );
}

/* small corner mark of a button that opens a fly-out */
function FlyTool({ icon, label, className = "w-6" }: { icon: string; label: string; className?: string }) {
  return (
    <button aria-label={label} className={`relative flex h-6 items-center justify-center ${className}`}>
      <Icon name={icon} />
      <svg viewBox="0 0 4 4" className="absolute right-0.5 bottom-0.5 size-1" aria-hidden="true">
        <path d="M4 0v4H0z" fill="#3b4245" />
      </svg>
    </button>
  );
}

function Dots() {
  return (
    <svg viewBox="0 0 2 14" className="h-3.5 w-0.5" aria-hidden="true">
      <path d="M1 0v14" stroke="#a3a7a9" strokeWidth="2" strokeDasharray="2 2" />
    </svg>
  );
}

function Triangle() {
  return (
    <svg viewBox="0 0 9 8" className="ml-3.5 h-2 w-[9px]" aria-hidden="true">
      <path d="M0 0h9L4.500 8z" fill="#85898b" />
    </svg>
  );
}

function SidePanel() {
  return (
    <aside className="flex w-[280px] shrink-0 flex-col bg-[#f8fafa] text-[12px] text-[#45494b]">
      <div className="flex h-[26px] shrink-0 bg-[#dae0e0]">
        <Tool icon="modelTree" label="Model tree" className="w-8 bg-[#f8fafa] pt-0.5 pl-0.5" />
        <Tool icon="folders" label="Folder browser" className="w-[30px] pt-0.5" />
      </div>
      <div className="mb-px flex h-8 shrink-0 items-center">
        <Triangle />
        <Tool icon="sheetBox" label="Drawing" className="ml-0.5 w-[22px]" />
        <span className="ml-1 flex w-[21px]"><Dots /></span>
        <Tool icon="expand" label="Expand" />
        <Tool icon="list" label="Show list" className="w-[22px]" />
        <span className="mr-[5px] ml-1.5 h-6 w-px bg-[#b3b6b8]" />
        <Tool icon="columns" label="Columns" />
        <span className="mr-1 ml-[3px] h-6 w-px bg-[#b3b6b8]" />
        <Tool icon="hatch" label="Hatch" />
        <Tool icon="layers" label="Layers" />
        <FlyTool icon="doc" label="Tree settings" className="mr-1 ml-auto w-6" />
      </div>
      <Tree rows={DRAWING_TREE} />
      <div className="mx-2 mt-auto h-[3px] shrink-0 bg-[#dae0e0]" />
      <div className="mb-0.5 flex h-[33px] shrink-0 items-center">
        <Triangle />
        <Tool icon="greenCube" label="Part" className="ml-0.5 w-[22px]" />
        <span className="ml-0.5 flex w-[23px]"><Dots /></span>
        <FlyTool icon="solid" label="Bodies" />
        <Tool icon="expand" label="Expand" />
        <Tool icon="list" label="Show list" className="mr-0.5 w-6" />
        <Tool icon="gridEye" label="Column display" className="w-6 border border-[#a9adaf] bg-[#dddfe0]" />
        <span className="mx-1 h-6 w-px bg-[#b3b6b8]" />
        <Tool icon="filter" label="Filter" className="ml-0.5 w-6" />
        <Tool icon="columns" label="Columns" />
        <span className="ml-0.5 h-6 w-px bg-[#b3b6b8]" />
        <button aria-label="More" className="w-6 pb-1 text-[18px] leading-5">»</button>
        <FlyTool icon="doc" label="Tree settings" className="mr-1 ml-auto w-6" />
      </div>
      <div className="mb-1.5 flex h-[389px] shrink-0 overflow-hidden">
        <div className="min-w-0 flex-1">
          <Tree rows={MODEL_TREE} />
        </div>
        <div className="mr-[5px] flex w-[15px] flex-col border border-[#c3c6c8] bg-[#dfe1e2]">
          <button aria-label="Scroll up" className="flex h-3.5 items-center justify-center bg-[#f8fafa]">
            <svg viewBox="0 0 8 4" className="h-1 w-2">
              <path d="M0 4h8L4 0z" fill="#a3a7a9" />
            </svg>
          </button>
          <span className="h-[336px] border-y border-[#a9adaf] bg-[#f8fafa]" />
          <button aria-label="Scroll down" className="mt-auto flex h-3.5 items-center justify-center border-t border-[#c3c6c8] bg-[#f8fafa]">
            <Caret className="text-[#a3a7a9]" />
          </button>
        </div>
      </div>
    </aside>
  );
}

/* ---------- drawing sheet ---------- */

const PURPLE = "#36005f";
const LINE = "#3a5ba8";
const GREY = "#a4a8b0";
const BROWN = "#8a5a64";

function Frame() {
  return (
    <g fill="none" stroke="#6079b4">
      <path d="M499.500 1040V199.500H1940M1045.500 223v48M1594.500 223v48" />
      <path d="M543.500 1040V271.500H1940M519 630.500h24" />
    </g>
  );
}

function SectionView() {
  return (
    <g fill="none" strokeWidth="1">
      <g stroke={GREY}>
        <path d="M702 734l-6.500 36 3.500 42M1039 738l6.500 32-4 42M824 813.500h93M866.500 732v102" />
        <path d="M867.500 732v102M688 769.500h364" />
      </g>
      <path d="M688 776.500h364M873.500 732v102" stroke={BROWN} />
      <g stroke={LINE}>
        <path d="M701.500 733.500H1039.500L1050 773.500 1044.500 812.500M701.500 733.500L690.500 773.500 696 812.500M690.500 773.500H1050" />
        <path d="M762.500 734L753.500 774 758.500 812M978.500 734L987.500 774 982.500 812" />
        <path d="M696 812.500H822L829 832.500H913L920 812.500H1044" />
        <path d="M818.500 736.500H765.500L756 774 760.500 809.500H980L985.500 774 975.500 736.500H922.500V756.500H889.500V775.500H851.500V756.500H818.500z" />
        <path d="M821.500 734V753.500H919.500V734M854.500 754V773.500H886.500V754M824 809.500L830.500 829.500H910.500L917 809.500" />
        <path d="M766.500 737v3l2.500 3.500H789l2.500-3.500v-3M766.500 740.500h25M949.500 737v3l2.500 3.500h20l2.500-3.500v-3M949.500 740.500h25" />
        <path d="M697.500 812.500h19v16h-19zM1023.500 812.500h20v16h-20z" />
      </g>
      <path d="M778 736l2-2M818 738l2-2M844 756l2-2M887 756l2-2M950 736l2-2M868 775l2-2M979 749l2-2M984 788l2-2M756 757l2-2M756 801l2-2M789 812l2-2M960 812l2-2M854 832l2-2M897 832l2-2M824 819l2-2" stroke={PURPLE} />
      <g stroke="#4a2c66">
        <path d="M902.500 635.500H877.500L788 736M877.500 635.500L843.500 755" />
        <path d="M629 872.500l13.500 23L669 849M642.500 895.500H667L712 828.500" />
        <path d="M1020.500 883.500H995.500L967.500 811M1020.500 868.500h103v31h-103zM1068.500 868v31" />
      </g>
      <g fill={PURPLE}>
        <path d="M788 736.500L797 721l5 4zM843.500 755.500L844.500 738l6.500 1.500zM712 828.500L700.500 841l5.500 4zM967.500 811L970 829l6.500-2z" />
      </g>
      <path d="M1030.500 890a15.500 14.500 0 0 1 31 0z" stroke={PURPLE} strokeWidth="1.300" />
    </g>
  );
}

function AuxiliaryView() {
  return (
    <g fill="none" strokeWidth="1">
      <g stroke={GREY}>
        <path d="M1332.500 574.500L1697 938.500M1377 568.500L1322 624.500M1703.500 896L1648 950M1544 736L1523 770.500 1492 794" />
        <path d="M1316 617.500L1657 957M1436 742L1533 838M1432 759L1514 841" />
        <path d="M1314 616.500L1328 631M1477 779.500L1492 794.500M1641 944L1655 957.500" strokeWidth="3" />
      </g>
      <path d="M1328 579L1692 943.500" stroke={BROWN} strokeOpacity=".7" strokeWidth="1.200" />
      <g stroke={LINE}>
        <path d="M1372.500 564L1707.500 899 1687.500 934.500 1655 957.500 1314 616.500 1337.500 584z" />
        <path d="M1337.500 584L1687.500 934.500" />
        <path d="M1314 616.500L1303 627.500 1317 641.500 1328 630.500M1641 944L1630 954.500 1644 968 1655 957.500" />
        <path d="M1436 739L1430.500 759.500 1513 841.500 1533 835" />
        <path d="M1536 727.500L1501.500 747.500 1477 779 1467 790.500 1480.500 805 1492 794.500" />
        <path d="M1284 749L1321 712M1594 985L1561 1018" />
        <path d="M1321 712L1594 985" strokeDasharray="10 3 2 3 2 3" />
      </g>
      <path d="M1283.500 749.500L1294 734l5 4.500zM1560.500 1018.500L1567 1007.500l5 4z" fill="#004f9e" />
    </g>
  );
}

const ZONES = [
  { x: 771, y: 249, t: "4" },
  { x: 1326, y: 249, t: "3" },
  { x: 1882, y: 249, t: "2" },
  { x: 521, y: 427, t: "D" },
  { x: 524, y: 840, t: "C" },
];

const SCALE_NOTES = [
  { x: 294, t: "SCALE : 0.333" },
  { x: 364, t: "TYPE : PART" },
  { x: 428, t: "NAME : DRONE-BODY" },
  { x: 529, t: "SIZE : C" },
  { x: 572, t: "SHEET 1  OF 2" },
];

const TOLERANCES = [
  { y: 978, a: "X.X", b: "+-0.1" },
  { y: 987, a: "X.XX", b: "+-0.01" },
  { y: 997, a: "X.XXX", b: "+-0.001" },
  { y: 1006, a: "ANG.", b: "+-0.5" },
];

function SheetTexts() {
  return (
    <g className="font-['Liberation_Sans']">
      <g className="text-[21px]" fill={PURPLE}>
        <text x="843" y="438">FONT TYPE TEST</text>
        <text x="903" y="642">INTERRUPTED SURFACE</text>
        <text x="811" y="924">SECTION D-D</text>
        <text x="630" y="865">63</text>
        <text x="1074" y="890">.003</text>
      </g>
      <g className="text-[21px]" fill="#004f9e">
        <text x="1207" y="756">VIEW B</text>
        <text x="1474" y="1019">VIEW B</text>
      </g>
      <g className="font-['Open_Sans'] text-[20px] font-light" fill="#6b5d80" textAnchor="middle">
        {ZONES.map((z) => (
          <text key={z.t} x={z.x} y={z.y}>{z.t}</text>
        ))}
      </g>
      <g className="text-[9px]" fill="#9093a0">
        {SCALE_NOTES.map((s) => (
          <text key={s.t} x={s.x} y="1015">{s.t}</text>
        ))}
        {TOLERANCES.map((s) => (
          <g key={s.a}>
            <text x="1723" y={s.y} textAnchor="middle">{s.a}</text>
            <text x="1738" y={s.y}>{s.b}</text>
          </g>
        ))}
      </g>
    </g>
  );
}

const VIEW_TOOLS = [
  { icon: "zoomFit", label: "Refit" },
  { icon: "zoomIn", label: "Zoom in" },
  { icon: "zoomOut", label: "Zoom out" },
  { icon: "repaint", label: "Repaint" },
  { icon: "shade", label: "Display style", fly: true },
  { icon: "savedView", label: "Saved views", fly: true },
  { icon: "datumDisp", label: "Datum display", fly: true },
];

function Canvas() {
  return (
    <div className="relative min-h-0 flex-1 overflow-hidden border-b border-[#85898b] bg-[#e8e9ed]">
      <svg viewBox="283 162 1637 856" preserveAspectRatio="xMinYMin slice" className="absolute inset-0 size-full" role="img" aria-label="Drawing sheet">
        <Frame />
        <SectionView />
        <AuxiliaryView />
        <SheetTexts />
      </svg>
      <div className="absolute top-[7px] left-[724px] flex h-8 w-[188px] items-center justify-around border border-[#9ea3a5] bg-[#fafbfc] px-0.5">
        {VIEW_TOOLS.map((t) =>
          t.fly ? (
            <FlyTool key={t.icon} icon={t.icon} label={t.label} className="w-[26px]" />
          ) : (
            <Tool key={t.icon} icon={t.icon} label={t.label} className="w-[26px]" />
          ),
        )}
      </div>
      <div role="tooltip" className="absolute top-[298px] left-[683px] border border-[#a8d4ec] bg-white px-[7px] py-1 text-[12px] leading-5 whitespace-nowrap text-[#1f2426] shadow-[2px_2px_2px_#8a8d92]">
        Select LOCATION for note.
      </div>
      <svg viewBox="0 0 26 40" className="absolute top-[303px] left-[672px] h-10 w-[26px]" aria-hidden="true">
        <path d="M1.500 2v29.500l1.500 .5 6.500-6 5.500 11.500c1 1.500 5 0 4.500-2L14.500 24.500h9.500l.5-1.500z" fill="#f4f5f7" stroke="#0a0a0a" strokeWidth="1.900" strokeLinejoin="round" />
      </svg>
    </div>
  );
}

function SheetBar() {
  return (
    <div className="mt-[3px] flex h-6 shrink-0 items-start border border-[#85898b] bg-[#e0e0e0] text-[12px] text-[#33383a]">
      <div className="flex h-5 w-[75px] items-center gap-2 pl-1">
        <button aria-label="First sheet">
          <svg viewBox="0 0 12 8" className="h-2 w-3"><path d="M6 0v8L0 4zM12 0v8L6 4z" fill="#4d5356" /></svg>
        </button>
        <button aria-label="Previous sheet">
          <svg viewBox="0 0 7 8" className="h-2 w-[7px]"><path d="M7 0v8L0 4z" fill="#a3a7a9" /></svg>
        </button>
        <button aria-label="Next sheet">
          <svg viewBox="0 0 7 8" className="h-2 w-[7px]"><path d="M0 0v8l7-4z" fill="#a3a7a9" /></svg>
        </button>
        <button aria-label="Last sheet">
          <svg viewBox="0 0 12 8" className="h-2 w-3"><path d="M0 0v8l6-4zM6 0v8l6-4z" fill="#4d5356" /></svg>
        </button>
      </div>
      <button aria-label="New sheet" className="flex h-[18px] w-5 items-center justify-center border border-[#85898b] text-[14px] font-bold">+</button>
      <button className="h-[22px] w-[42px] bg-[#f8f9fa] font-bold">Body</button>
      <button className="h-5 w-[79px] border border-t-0 border-[#85898b]">Sheet 2</button>
    </div>
  );
}

/* ---------- status bar ---------- */

function StatusBar() {
  return (
    <footer className="flex h-[34px] shrink-0 items-center border-t border-[#a9b7ba] bg-[#f8fafa] text-[12px] text-[#3f4446]">
      <button aria-label="Navigator" className="ml-[5px] flex size-6 items-center justify-center border border-[#a9adaf] bg-[#dddfe0]">
        <Icon name="navPane" />
      </button>
      <Tool icon="globe" label="Browser" className="ml-0.5 w-6" />
      <Tool icon="pane" label="Full screen" className="ml-0.5 w-6" />
      <span className="ml-[7px] h-6 w-px bg-[#b3b6b8]" />
      <svg viewBox="0 0 12 12" className="ml-[3px] size-3" aria-hidden="true">
        <path d="M.5 3.500h5v-3L11.500 6l-6 5.500v-3h-5z" fill="#3fb4e8" stroke="#14618a" />
      </svg>
      <p className="ml-0.5">Select LOCATION for note.</p>
      <div className="ml-auto flex items-center pr-[18px]">
        <span className="h-[26px] w-px bg-[#b3b6b8]" />
        <span className="ml-1 size-2.5 rounded-full bg-[#4fcf4b]" />
        <span className="ml-0.5 size-1.5 rounded-full bg-[#cbcdce]" />
        <span className="ml-px size-1.5 rounded-full bg-[#cbcdce]" />
        <span className="ml-1 h-[26px] w-px bg-[#b3b6b8]" />
        <Tool icon="binoc" label="Find" className="ml-0.5 w-6" />
        <button aria-label="Find list" className="flex h-6 w-3 items-center justify-center"><Caret /></button>
        <span className="ml-1 h-[26px] w-px bg-[#b3b6b8]" />
        <Tool icon="marquee" label="Box select" className="ml-0.5 w-6" />
        <button aria-label="Select list" className="flex h-6 w-3 items-center justify-center"><Caret /></button>
        <div className="relative ml-[92px]">
          <select aria-label="Selection filter" defaultValue="General" className="h-[23px] w-[165px] appearance-none border border-[#a3a7a9] bg-[#f8f9fa] pl-[7px]">
            <option>General</option>
          </select>
          <span className="pointer-events-none absolute inset-y-0 right-0 flex w-4 items-center justify-center border-l border-[#a3a7a9]">
            <Caret />
          </span>
        </div>
      </div>
    </footer>
  );
}

export default function App() {
  return (
    <div className="flex h-screen flex-col overflow-hidden bg-[#f4f6f6] font-['Roboto','Open_Sans',sans-serif]">
      <TitleBar />
      <TabBar />
      <Ribbon />
      <main className="flex min-h-0 flex-1">
        <SidePanel />
        <div className="w-[3px] shrink-0 bg-[#dae0e0]" />
        <section className="flex min-w-0 flex-1 flex-col">
          <Canvas />
          <SheetBar />
        </section>
      </main>
      <StatusBar />
    </div>
  );
}
